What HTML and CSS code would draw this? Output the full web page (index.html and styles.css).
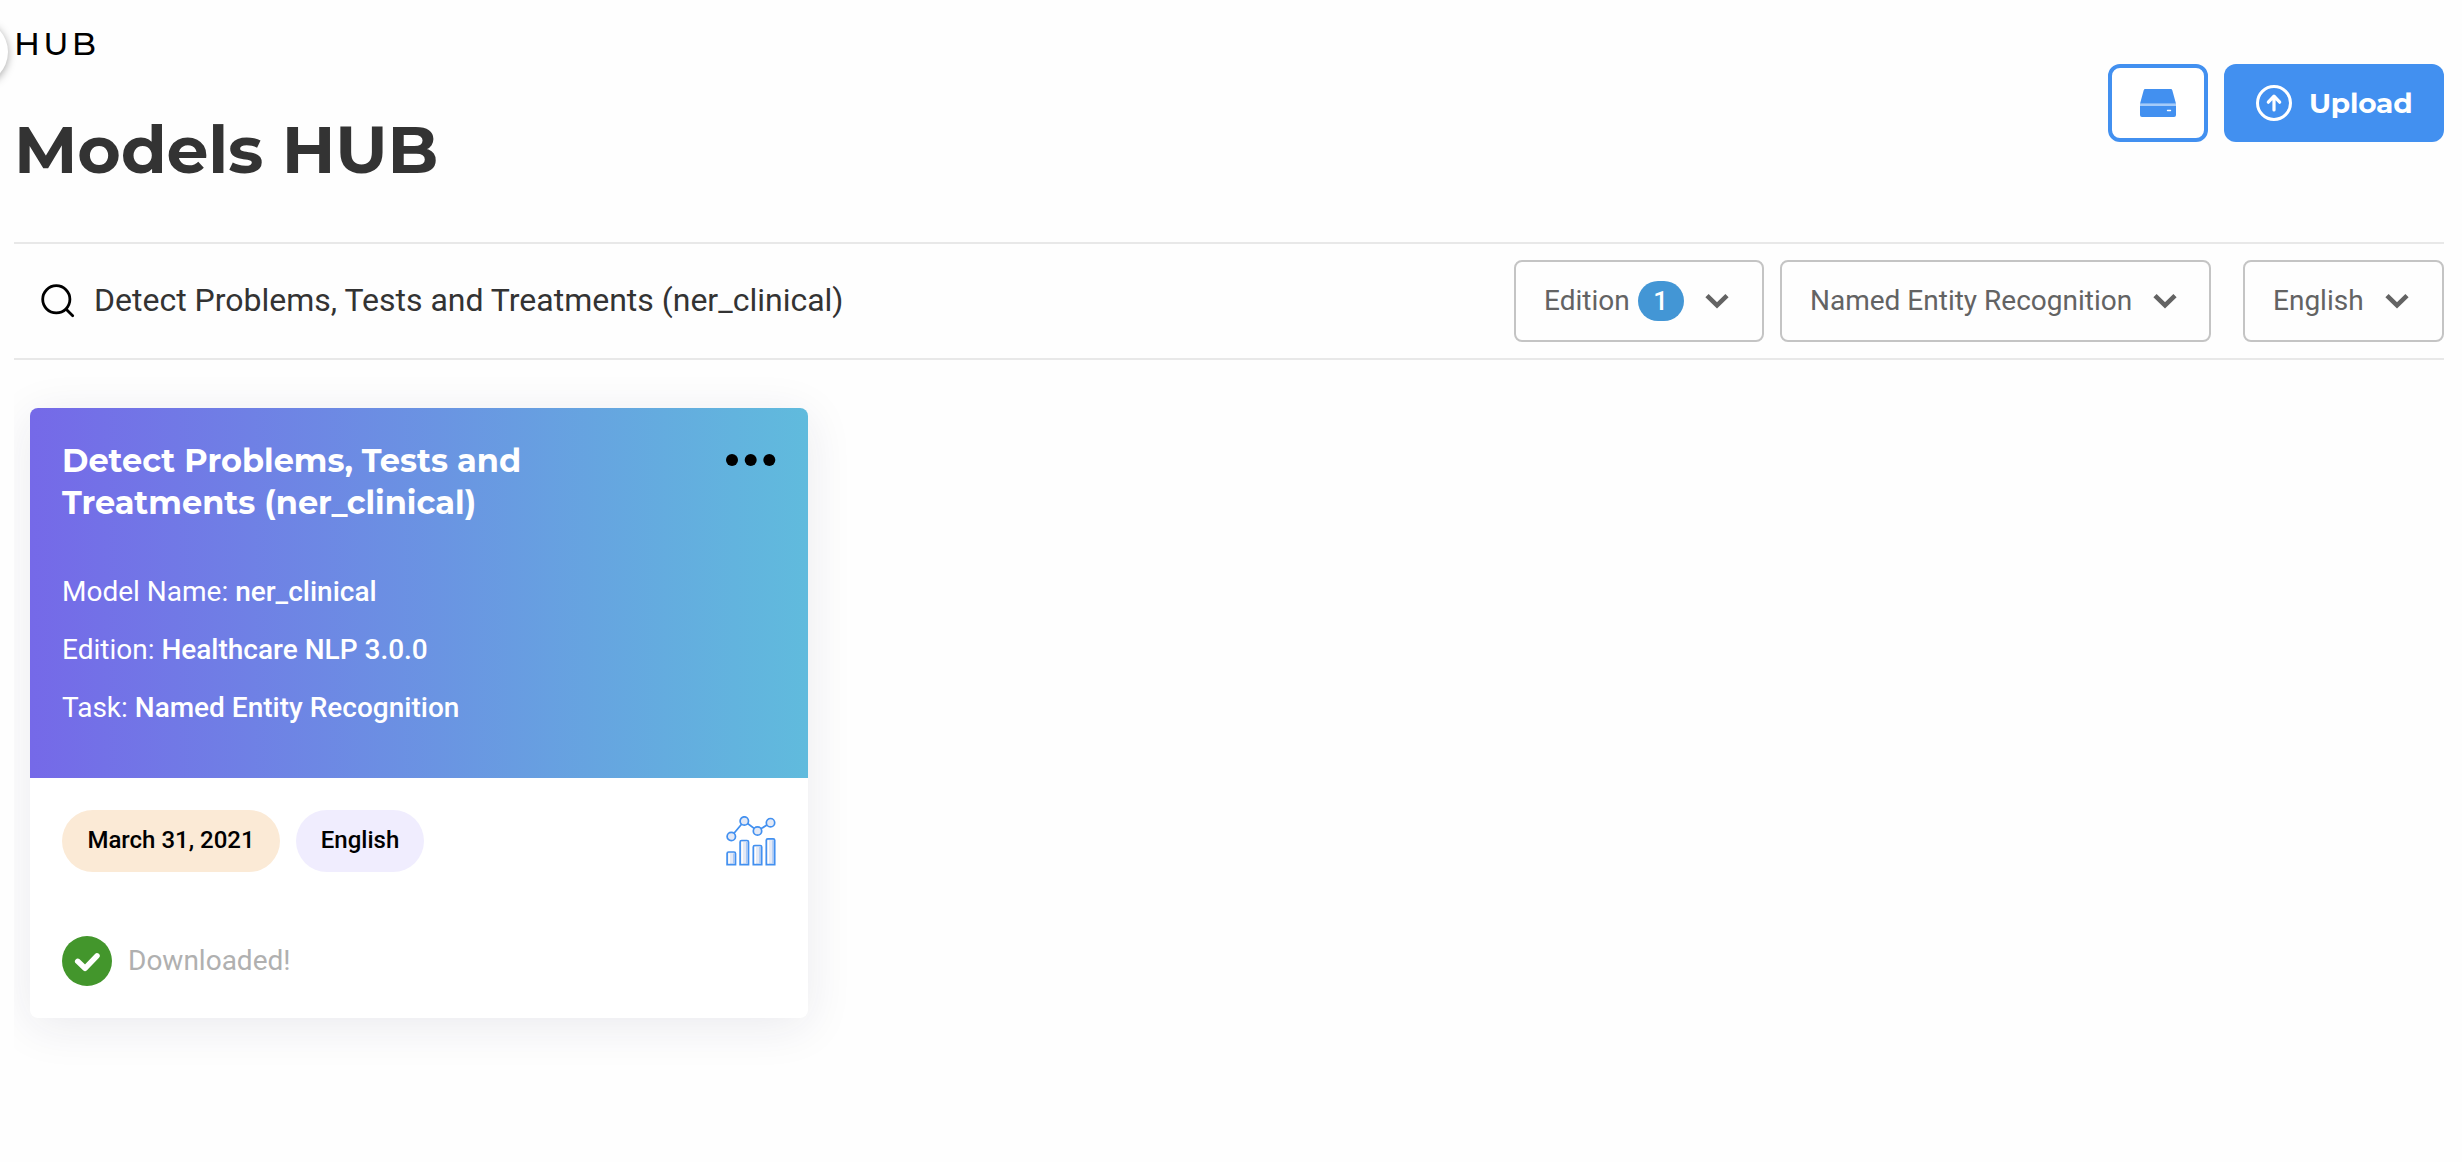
FILE: index.html
```html
<!DOCTYPE html>
<html lang="en">
<head>
<meta charset="utf-8">
<title>Models HUB</title>
<link rel="stylesheet" href="styles.css">
</head>
<body>
<div class="sidebar-toggle"></div>
<div class="page">
  <header class="header">
    <div class="headings">
      <div class="eyebrow"><span>HUB</span></div>
      <h1 class="title"><span>Models HUB</span></h1>
    </div>
    <div class="actions">
      <button class="btn btn-outline" aria-label="Storage">
        <svg width="36" height="28" viewBox="0 0 36 28">
          <path d="M5.200 0h25.600q1.200 0 1.500 1.200L36 14.800H0L3.700 1.200Q4 0 5.200 0z" fill="#4290f0"/>
          <path d="M0 14.800h36v2.200H0z" fill="#a5cbf9"/>
          <path d="M0 17h36v9q0 2-2 2H2q-2 0-2-2z" fill="#4290f0"/>
          <path d="M27.500 21.500h3" stroke="#fff" stroke-width="1.400" stroke-linecap="round"/>
        </svg>
      </button>
      <button class="btn btn-primary">
        <svg width="36" height="36" viewBox="0 0 36 36" fill="none" stroke="#fff" stroke-linecap="round" stroke-linejoin="round">
          <circle cx="18" cy="18" r="16.500" stroke-width="3"/>
          <path d="M18 25V11.500M12.300 17.200 18 11.200l5.700 6" stroke-width="3.200"/>
        </svg>
        <span class="upload-label">Upload</span>
      </button>
    </div>
  </header>

  <div class="toolbar">
    <div class="search">
      <svg width="34" height="34" viewBox="0 0 34 34" fill="none" stroke="#000" stroke-width="2.800" stroke-linecap="round">
        <circle cx="15.300" cy="15.300" r="13.600"/><path d="M25.200 25.200 31.700 31.700"/>
      </svg>
      <span class="query">Detect Problems, Tests and Treatments (ner_clinical)</span>
    </div>
    <div class="filters">
      <div class="select select-edition"><span class="label">Edition</span><span class="count">1</span>
        <svg class="chevron" width="24" height="16" viewBox="0 0 24 16" fill="none" stroke="#636363" stroke-width="4.600"><path d="M2 2.600l10 9.800 10-9.800"/></svg>
      </div>
      <div class="select select-task"><span class="label">Named Entity Recognition</span>
        <svg class="chevron" width="24" height="16" viewBox="0 0 24 16" fill="none" stroke="#636363" stroke-width="4.600"><path d="M2 2.600l10 9.800 10-9.800"/></svg>
      </div>
      <div class="select select-language"><span class="label">English</span>
        <svg class="chevron" width="24" height="16" viewBox="0 0 24 16" fill="none" stroke="#636363" stroke-width="4.600"><path d="M2 2.600l10 9.800 10-9.800"/></svg>
      </div>
    </div>
  </div>

  <main class="results">
    <article class="card">
      <div class="card-head">
        <div class="card-top">
          <h2 class="card-title"><span class="line-one">Detect Problems, Tests and</span><br><span class="line-two">Treatments (ner_clinical)</span></h2>
          <svg class="more" width="50" height="12" viewBox="0 0 50 12"><circle cx="6" cy="6" r="6"/><circle cx="24.700" cy="6" r="6"/><circle cx="43.300" cy="6" r="6"/></svg>
        </div>
        <div class="meta">
          <div>Model Name: <b>ner_clinical</b></div>
          <div>Edition: <b>Healthcare NLP 3.0.0</b></div>
          <div>Task: <b>Named Entity Recognition</b></div>
        </div>
      </div>
      <div class="card-body">
        <div class="tags">
          <span class="tag tag-date">March 31, 2021</span>
          <span class="tag tag-language">English</span>
          <svg class="chart" width="50" height="50" viewBox="0 0 50 50" fill="#e4e9f5" stroke="#4290f0" stroke-width="1.700">
            <path d="M5.300 20.500 18.300 5 31.500 15 44.500 6.700" fill="none"/>
            <circle cx="5.300" cy="20.500" r="4.200"/><circle cx="18.300" cy="5" r="4.200"/><circle cx="31.500" cy="15" r="4.200"/><circle cx="44.500" cy="6.700" r="4.200"/>
            <path d="M7.800 37v11M20.800 25.500v22.500M34 30.500v17.500M47 24v24" stroke="#a3c5f5" stroke-width="2"/>
            <path d="M1.100 48.600V37.500q0-1.500 1.500-1.500h5.400q1.500 0 1.500 1.500v11.100zM14.100 48.600V26q0-1.500 1.500-1.500h5.400q1.500 0 1.500 1.500v22.600zM27.300 48.600V31q0-1.500 1.500-1.500h5.400q1.500 0 1.500 1.500v17.600zM40.300 48.600V24.300q0-1.500 1.500-1.500h5.400q1.500 0 1.500 1.500v24.300z"/>
            <path d="M7.900 37.500v10M20.900 26v21.500M34.100 31v16.500M47.100 24.300v23.200" stroke="#a3c5f5" stroke-width="1.600"/>
            <path d="M3.200 37.500v10M16.200 26v21.500M29.400 31v16.500M42.400 24.300v23.200" stroke="#fff" stroke-width="1.300"/>
          </svg>
        </div>
        <div class="status">
          <svg width="50" height="50" viewBox="0 0 50 50"><circle cx="25" cy="25" r="25" fill="#43962c"/><path d="M15.700 25.300l7.300 7 12-12.500" fill="none" stroke="#fff" stroke-width="5.500" stroke-linecap="round" stroke-linejoin="round"/></svg>
          <span class="status-label">Downloaded!</span>
        </div>
      </div>
    </article>
  </main>
</div>
</body>
</html>
```

FILE: styles.css
```css
* { box-sizing: border-box; }
body {
  margin: 0;
  background: #fefefe;
  font-family: Roboto, "Liberation Sans", sans-serif;
  font-size: 28px;
  overflow: hidden;
}
svg { display: block; flex: none; }
h1, h2 { margin: 0; }
.sidebar-toggle {
  position: absolute;
  left: -56px;
  top: 20px;
  width: 64px;
  height: 64px;
  border-radius: 50%;
  background: #fff;
  box-shadow: 0 2px 8px rgba(0, 0, 0, 0.35);
}
.page { padding: 0 18px 0 14px; height: 1162px; }
.header {
  display: flex;
  justify-content: space-between;
  height: 242px;
}
.headings { padding-top: 24px; white-space: nowrap; }
.eyebrow {
  font: 500 32px/40px Montserrat, Inter, sans-serif;
  letter-spacing: 3.2px;
  color: #000;
}
.title {
  margin-top: 46px;
  font: 700 66.500px/80px Montserrat, Inter, sans-serif;
  letter-spacing: -0.200px;
  color: #333;
}
.actions { display: flex; gap: 16px; padding-top: 64px; }
.btn {
  display: flex;
  align-items: center;
  height: 78px;
  padding: 0;
  border-radius: 12px;
}
.btn-outline {
  justify-content: center;
  width: 100px;
  border: 4px solid #4290f0;
  background: #fff;
}
.btn-primary {
  width: 220px;
  padding-left: 32px;
  gap: 17px;
  border: 0;
  background: #4290f0;
  color: #fff;
  font: 700 28px/36px Montserrat, Inter, sans-serif;
  letter-spacing: -0.200px;
}
.toolbar {
  display: flex;
  justify-content: space-between;
  align-items: center;
  height: 118px;
  border-top: 2px solid #e8e8e8;
  border-bottom: 2px solid #e8e8e8;
}
.search {
  display: flex;
  align-items: center;
  gap: 19px;
  padding-left: 27px;
  font-size: 32px;
  color: #333;
}
.query, .label, .status-label { padding-bottom: 2px; }
.filters { display: flex; }
.select {
  display: flex;
  align-items: center;
  height: 82px;
  padding-left: 28px;
  border: 2px solid #c4c4c4;
  border-radius: 8px;
  color: #636363;
  white-space: nowrap;
}
.select-edition { width: 250px; }
.select-task { width: 431px; margin-left: 16px; }
.select-language { width: 201px; margin-left: 32px; }
.chevron { margin-left: 21px; }
.count {
  width: 46px;
  margin-left: 8px;
  border-radius: 20px;
  background: #4396d5;
  color: #fff;
  font-weight: 500;
  font-size: 26px;
  line-height: 40px;
  text-align: center;
}
.results { padding: 48px 16px 120px; clip-path: inset(0); }
.card {
  width: 778px;
  height: 610px;
  border-radius: 8px;
  background: #fff;
  box-shadow: 0 8px 48px rgba(30, 30, 80, 0.09);
}
.card-head {
  height: 370px;
  padding: 32px;
  border-radius: 8px 8px 0 0;
  background: linear-gradient(90deg, #7569e8, #60bbdd);
  color: #fff;
}
.card-top { display: flex; justify-content: space-between; }
.card-title {
  font: 700 32px/42px Montserrat, Inter, sans-serif;
  white-space: nowrap;
}
.more { margin-top: 14px; }
.meta { margin-top: 39px; line-height: 58px; }
.meta b { font-weight: 500; }
.card-body { padding: 32px; }
.tags { display: flex; align-items: center; gap: 16px; }
.tag {
  height: 62px;
  border-radius: 31px;
  color: #000;
  font-size: 24px;
  font-weight: 500;
  line-height: 60px;
  text-align: center;
}
.tag-date { width: 218px; background: #fbead6; }
.tag-language { width: 128px; background: #f0edfe; }
.chart { margin-left: auto; }
.status {
  display: flex;
  align-items: center;
  gap: 16px;
  margin-top: 64px;
  color: #b0b0b0;
}
```
